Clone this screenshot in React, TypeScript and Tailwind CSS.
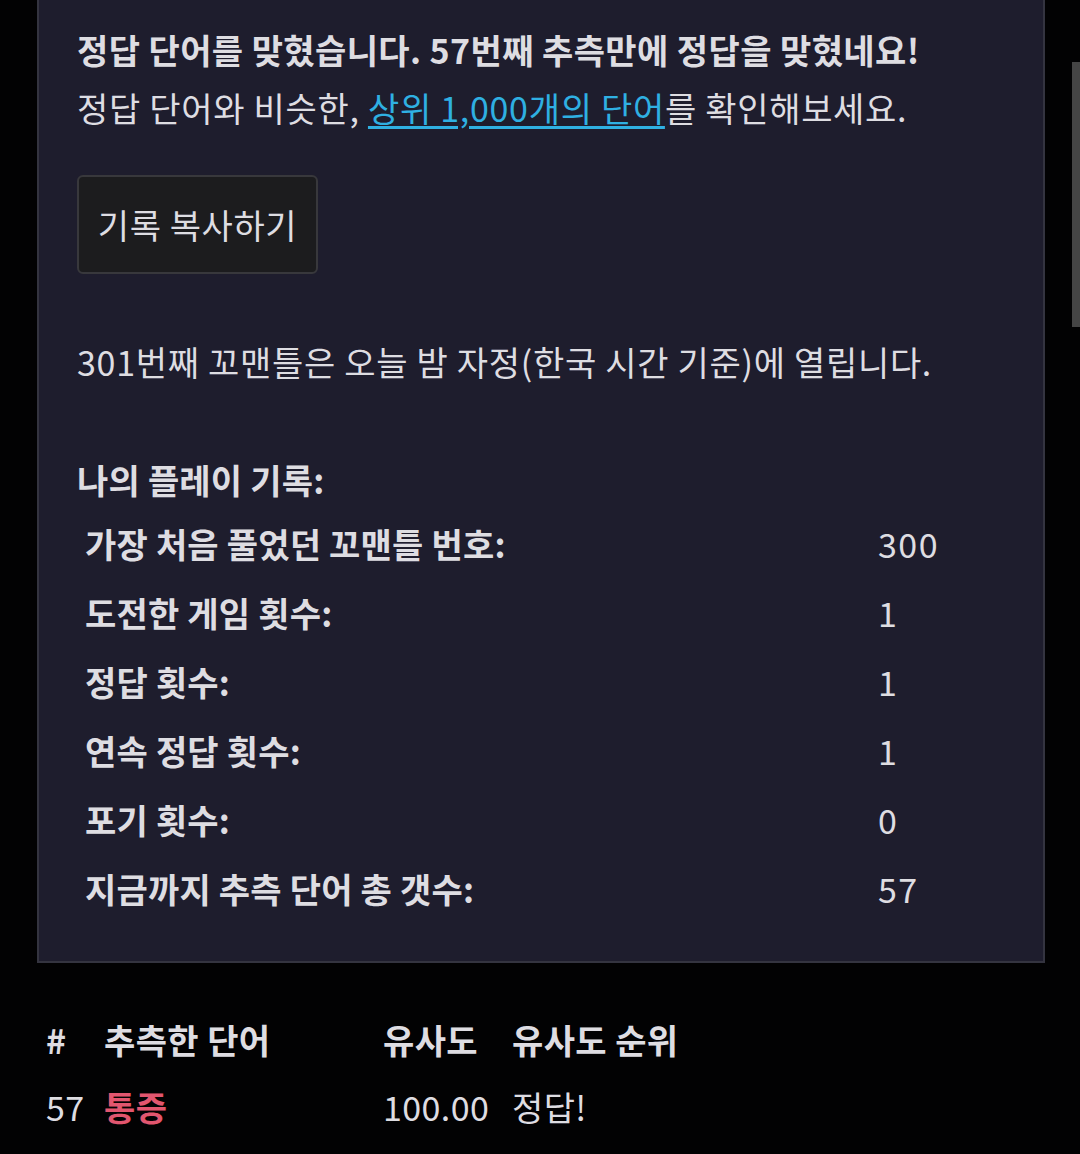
import React from 'react'

const stats: { label: string; value: string }[] = [
  { label: '가장 처음 풀었던 꼬맨틀 번호:', value: '300' },
  { label: '도전한 게임 횟수:', value: '1' },
  { label: '정답 횟수:', value: '1' },
  { label: '연속 정답 횟수:', value: '1' },
  { label: '포기 횟수:', value: '0' },
  { label: '지금까지 추측 단어 총 갯수:', value: '57' }
]

const font = { fontFamily: '"Noto Sans CJK KR", "Noto Sans", sans-serif' }

export default function App() {
  return (
    <div
      className="relative h-[1154px] w-[1080px] overflow-hidden bg-[#020203] text-[34px] tracking-[0.7px] text-[#dedde2]"
      style={font}
    >
      {/* Result panel */}
      <div className="ml-[37px] w-[1008px] border-x-2 border-b-2 border-[#343440] bg-[#1e1d2d] pb-[38px] pl-[38px] pt-[21px]">
        <p className="leading-[58px] font-bold tracking-[0.4px]">
          정답 단어를 맞혔습니다. 57번째 추측만에 정답을 맞혔네요!
        </p>
        <p className="leading-[58px]">
          정답 단어와 비슷한,{' '}
          <a href="#" className="text-[#2fb0e2] underline underline-offset-4">
            상위 1,000개의 단어
          </a>
          를 확인해보세요.
        </p>

        <button className="mt-[38px] h-[99px] w-[241px] rounded-md border-2 border-[#38383c] bg-[#1c1c1e] text-[34px] tracking-[0.6px] text-[#dedde2]">
          기록 복사하기
        </button>

        <p className="mt-[59px] leading-[58px]">
          301번째 꼬맨틀은 오늘 밤 자정(한국 시간 기준)에 열립니다.
        </p>

        <p className="mt-[60px] leading-[58px] font-semibold tracking-[0.2px]">나의 플레이 기록:</p>

        <div className="grid grid-cols-[801px_auto]">
          {stats.map((s) => (
            <React.Fragment key={s.label}>
              <div className="pl-[8px] leading-[69px] font-semibold tracking-[0.2px]">{s.label}</div>
              <div className="leading-[69px] tracking-[1.5px]">{s.value}</div>
            </React.Fragment>
          ))}
        </div>
      </div>

      {/* Guess table */}
      <div className="mt-[43px] ml-[46px] grid grid-cols-[58px_279px_129px_auto] tracking-[0.4px]">
        <div className="leading-[67px] font-bold">#</div>
        <div className="leading-[67px] font-bold">추측한 단어</div>
        <div className="leading-[67px] font-bold">유사도</div>
        <div className="leading-[67px] font-bold">유사도 순위</div>
        <div className="leading-[67px]">57</div>
        <div className="leading-[67px] font-bold text-[#e2566f]">통증</div>
        <div className="leading-[67px]">100.00</div>
        <div className="leading-[67px]">정답!</div>
      </div>

      {/* Scrollbar */}
      <div className="absolute right-0 top-[62px] h-[265px] w-[8px] bg-[#454545]" />
    </div>
  )
}
